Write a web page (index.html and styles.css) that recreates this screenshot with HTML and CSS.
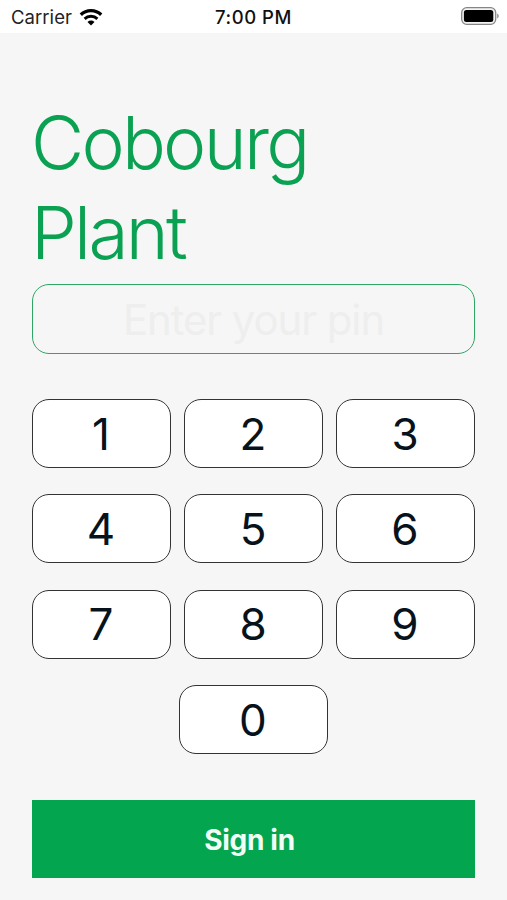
FILE: index.html
```html
<!DOCTYPE html>
<html lang="en">
<head>
<meta charset="utf-8">
<title>Sign in</title>
<link rel="stylesheet" href="styles.css">
</head>
<body>
<header class="status">
  <div class="carrier"><span>Carrier</span>
    <svg class="wifi" width="24" height="18" viewBox="0 0 24 18"><path d="M1.8 6.8a14.6 14.6 0 0 1 20.4 0" fill="none" stroke="#000" stroke-width="3.3"/><path d="M5.6 10.9a9.2 9.2 0 0 1 12.8 0" fill="none" stroke="#000" stroke-width="2.9"/><path d="M8.5 14a5 5 0 0 1 7 0L12 17.6z"/></svg>
  </div>
  <span class="time">7:00 PM</span>
  <svg class="battery" width="38" height="18" viewBox="0 0 38 18"><rect x=".7" y=".7" width="34" height="16.6" rx="5" fill="#f4f4f4" stroke="#858585" stroke-width="1.3"/><rect x="2.9" y="2.9" width="29.4" height="12.2" rx="2.5"/><path d="M36.2 6.5q1.6.8 1.6 2.5t-1.6 2.5z" fill="#8c8c8c"/></svg>
</header>
<main class="login">
  <h1 class="title">Cobourg<br>Plant</h1>
  <div class="pin"><span>Enter your pin</span></div>
  <div class="keypad">
    <button class="key">1</button><button class="key">2</button><button class="key">3</button>
    <button class="key">4</button><button class="key">5</button><button class="key">6</button>
    <button class="key">7</button><button class="key">8</button><button class="key">9</button>
    <button class="key zero">0</button>
  </div>
  <button class="submit">Sign in</button>
</main>
</body>
</html>
```
FILE: styles.css
```css
* { box-sizing: border-box; }
body { margin: 0; height: 900px; overflow: hidden; background: #f6f6f6; font-family: Inter, sans-serif; }
button { font-family: inherit; padding: 0; }
.status { display: grid; grid-template-columns: 1fr auto 1fr; align-items: center; height: 33px; padding: 0 8px 0 11px; background: #fff; font-size: 18.5px; color: #222; }
.carrier { display: flex; align-items: center; gap: 7px; }
.carrier span { letter-spacing: .05px; }
.time { font-weight: 550; font-size: 18.5px; letter-spacing: .55px; margin-left: -3px; color: #111; }
.battery { justify-self: end; margin-top: -1px; }
.login { padding: 65px 32px 0; }
.title { margin: 0 0 0 -1px; height: 186px; font-size: 73px; line-height: 90px; font-weight: 300; letter-spacing: -2.75px; color: #0ba152; }
.pin { display: flex; align-items: center; justify-content: center; height: 70px; border: 1.5px solid #2fa566; border-radius: 17px; font-size: 42px; letter-spacing: -1.1px; color: #eee; }
.keypad { display: grid; grid-template-columns: repeat(3, 139px); justify-content: space-between; grid-auto-rows: 69px; row-gap: 26.4px; margin-top: 45px; }
.key { background: #fff; border: 1.5px solid #333; border-radius: 17px; padding-right: 1px; font-size: 44px; line-height: 66px; color: #07131c; }
.zero { grid-column: 1 / -1; justify-self: center; width: 149px; }
.submit { display: block; width: 443px; height: 78px; margin-top: 46px; padding: 1px 8px 0 0; background: #03a54f; border: 0; color: #f2fff6; font-size: 28px; font-weight: 650; letter-spacing: -.3px; }
```
